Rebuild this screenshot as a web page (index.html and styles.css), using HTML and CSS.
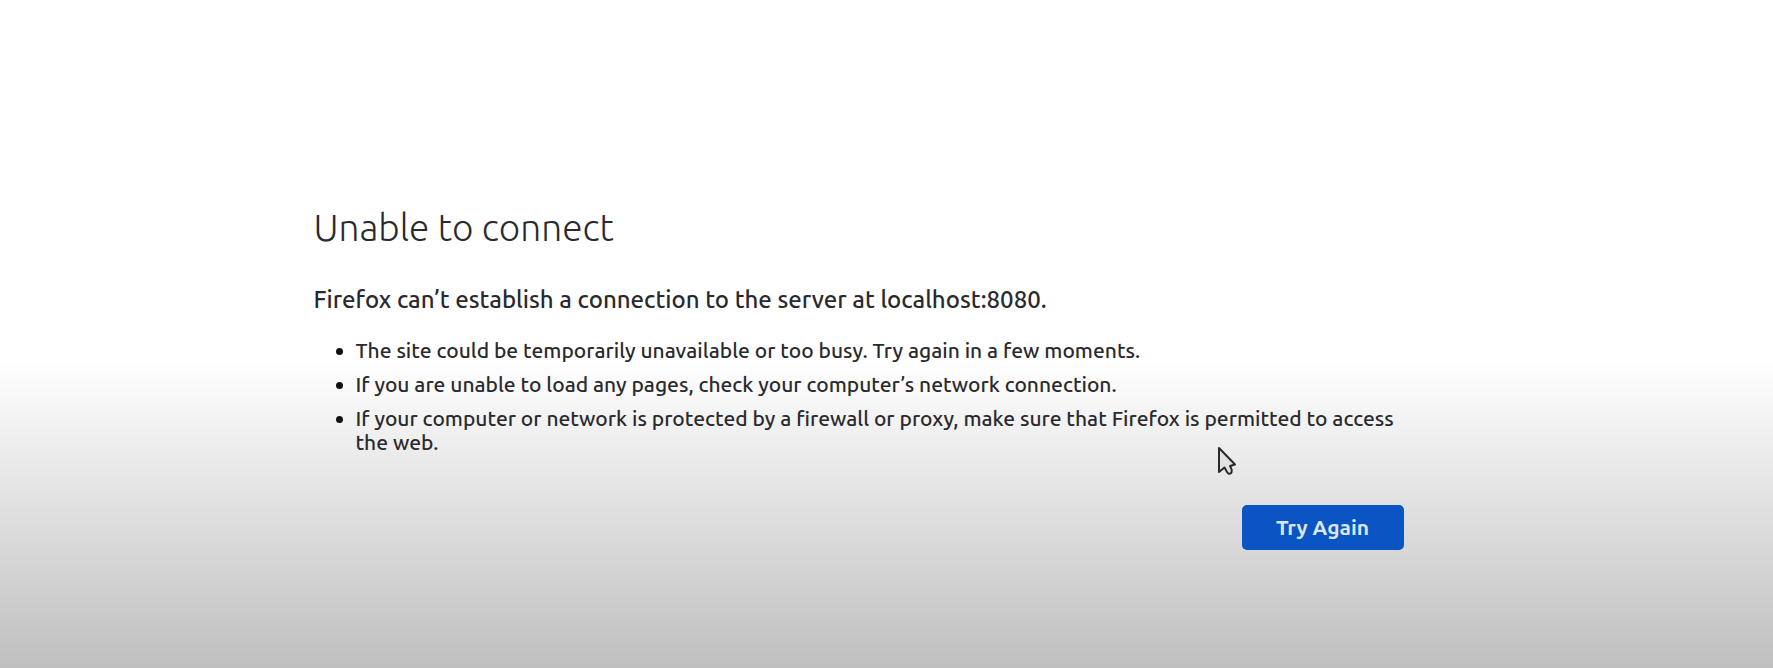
FILE: index.html
```html
<!DOCTYPE html>
<html lang="en">
<head>
<meta charset="utf-8">
<meta name="viewport" content="width=device-width, initial-scale=1">
<title>Problem loading page</title>
<link rel="stylesheet" href="styles.css">
</head>
<body>
<main class="error-page">
  <h1 class="error-title">Unable to connect</h1>
  <p class="error-lead">Firefox can’t establish a connection to the server at localhost:8080.</p>
  <ul class="error-tips">
    <li>The site could be temporarily unavailable or too busy. Try again in a few moments.</li>
    <li>If you are unable to load any pages, check your computer’s network connection.</li>
    <li>If your computer or network is protected by a firewall or proxy, make sure that Firefox is permitted to access the web.</li>
  </ul>
  <div class="error-actions">
    <button class="retry-button" type="button">Try Again</button>
  </div>
</main>
<svg class="pointer" viewBox="0 0 20 30" aria-hidden="true">
  <path d="M2 2V26L7.500 21.500L10 26Q12 29 14 27T13 20L18 18.500Z" fill="#e2e2e2" stroke="#2a2a2e" stroke-width="2" stroke-linejoin="round"/>
</svg>
</body>
</html>
```
FILE: styles.css
```css
* {
  box-sizing: border-box;
}

body {
  position: relative;
  min-height: 100vh;
  margin: 0;
  background: linear-gradient(#fff 54%, #bfbfbf 100%) #bfbfbf;
  color: #2a2a2e;
  font-family: Ubuntu, "Noto Sans", sans-serif;
}

.error-page {
  width: 80%;
  max-width: 1146px;
  margin: 0 auto;
  padding: 204px 56px 40px 0;
}

.error-title {
  margin: 0;
  font-size: 37px;
  font-weight: 300;
  line-height: 48px;
}

.error-lead {
  margin: 32px 0 0;
  font-size: 24px;
  font-weight: 500;
  line-height: 32px;
}

.error-tips {
  margin: 22px 0 0;
  padding: 0 0 0 42px;
  font-size: 21px;
  font-weight: 500;
  line-height: 24px;
}

.error-tips li + li {
  margin-top: 10px;
}

.error-tips li::marker {
  color: #111;
}

.error-actions {
  display: flex;
  justify-content: flex-end;
  margin-top: 51px;
}

.retry-button {
  min-width: 162px;
  padding: 10px 32px;
  border: 0;
  border-radius: 5px;
  background: #0b54c4;
  color: #dce6f2;
  font: bold 21px/25px Ubuntu, "Noto Sans", sans-serif;
}

.pointer {
  position: absolute;
  top: 446px;
  left: 1217px;
  width: 20px;
  height: 30px;
}
```
